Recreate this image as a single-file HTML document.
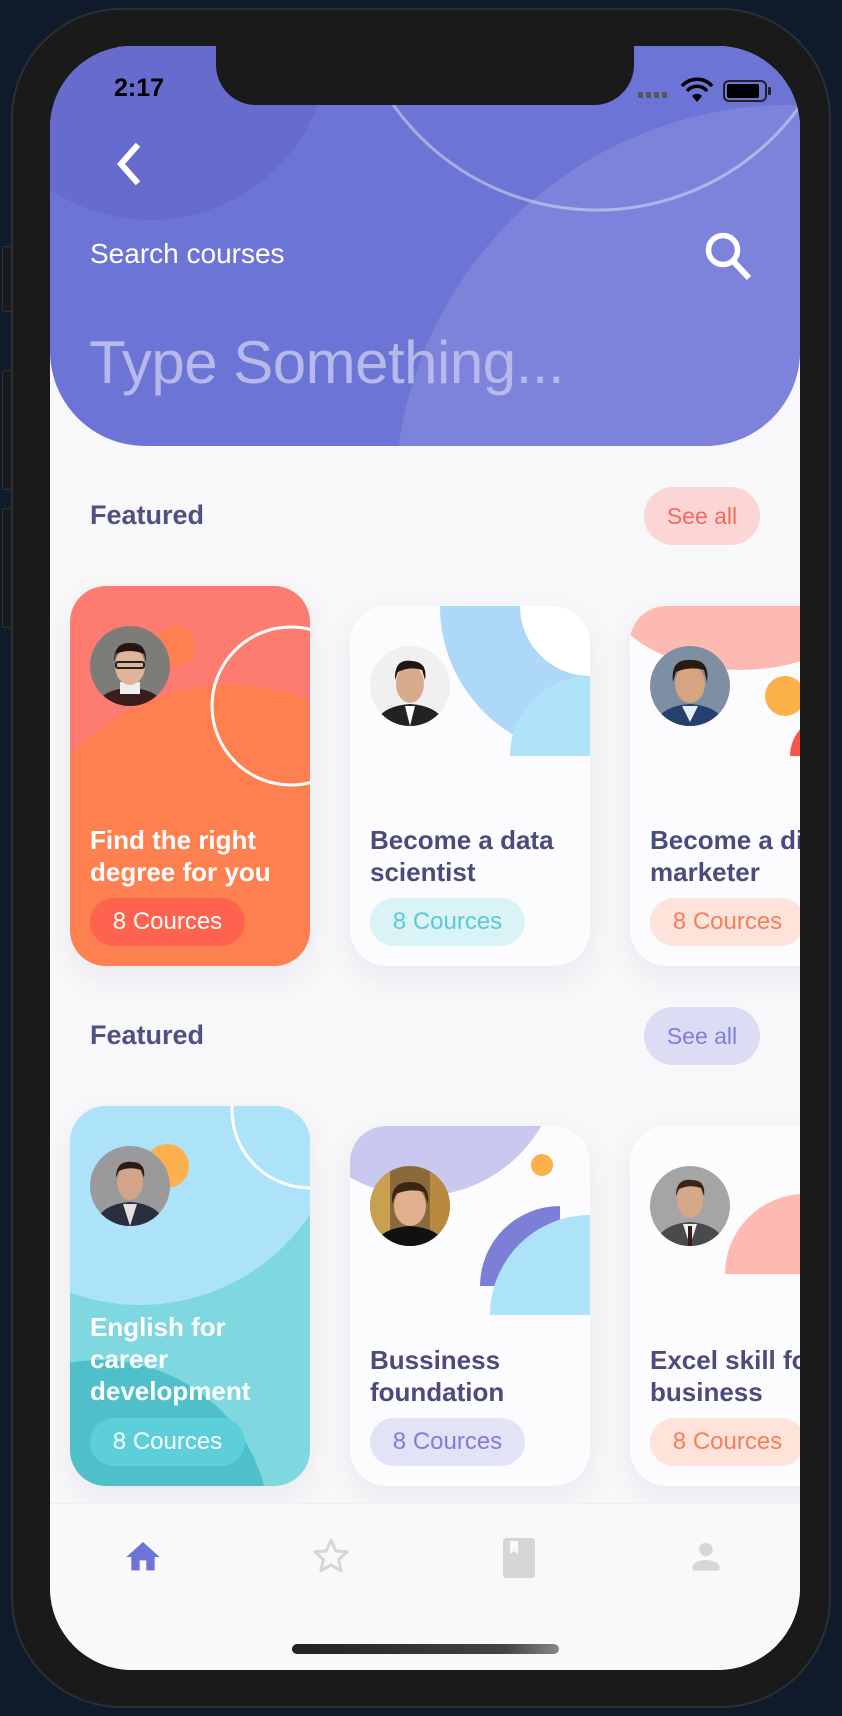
<!DOCTYPE html>
<html><head><meta charset="utf-8">
<style>
*{margin:0;padding:0;box-sizing:border-box}
html,body{width:842px;height:1716px;overflow:hidden;background:#0f1a2a;font-family:"Liberation Sans",sans-serif}
.abs{position:absolute}
.phone{left:11px;top:8px;width:820px;height:1700px;background:#1a1a1a;border-radius:110px;border:2px solid #2a2f38}
.btn{background:#1a1a1a;border:1px solid #333;border-radius:3px;width:12px;left:2px}
.screen{left:50px;top:46px;width:750px;height:1624px;background:#f8f8fa;border-radius:82px;overflow:hidden}
.card{position:absolute;width:240px;border-radius:36px;overflow:hidden;box-shadow:0 12px 30px rgba(60,60,110,0.08)}
.card svg{position:absolute;left:0;top:0}
.title{position:absolute;left:20px;font-weight:bold;font-size:26px;line-height:32px;color:#4a4c7c;white-space:nowrap}
.pill{position:absolute;left:20px;width:155px;height:48px;border-radius:24px;font-size:24px;line-height:48px;text-align:center}
.feat{position:absolute;left:90px;font-size:27px;font-weight:bold;color:#4f5180}
.see{position:absolute;left:644px;width:116px;height:58px;border-radius:29px;font-size:23px;line-height:58px;text-align:center}
</style></head><body>
<div class="abs btn" style="top:246px;height:66px"></div>
<div class="abs btn" style="top:370px;height:120px"></div>
<div class="abs btn" style="top:508px;height:120px"></div>
<div class="abs phone"></div>
<div class="abs screen">
<svg class="abs" style="left:0;top:0" width="750" height="400" viewBox="50 46 750 400">
<defs><clipPath id="hc"><path d="M50,46 H800 V351 A95,95 0 0 1 705,446 H145 A95,95 0 0 1 50,351 Z"/></clipPath></defs>
<g clip-path="url(#hc)">
<rect x="50" y="46" width="750" height="400" fill="#6c75d6"/>
<circle cx="150" cy="40" r="180" fill="#666bcd"/>
<circle cx="790" cy="500" r="395" fill="#7d83db"/>
<circle cx="597" cy="-40" r="250" fill="none" stroke="rgba(255,255,255,0.4)" stroke-width="3"/>
</g>
</svg>
<div class="abs" style="left:166px;top:0;width:418px;height:59px;background:#1a1a1a;border-radius:0 0 40px 40px"></div>
<div class="abs" style="left:64px;top:28px;font-size:25px;font-weight:bold;color:#000">2:17</div>
<svg class="abs" style="left:580px;top:30px" width="150" height="30">
<g fill="#555"><rect x="8" y="16" width="5" height="6" rx="1"/><rect x="16" y="16" width="5" height="6" rx="1"/><rect x="24" y="16" width="5" height="6" rx="1"/><rect x="32" y="16" width="5" height="6" rx="1"/></g>
<path d="M52,10 A20,20 0 0 1 82,10" stroke="#000" stroke-width="3.5" fill="none"/>
<path d="M57,15 A13,13 0 0 1 77,15" stroke="#000" stroke-width="3.5" fill="none"/>
<path d="M62,20 L67,26 L72,20 A7,7 0 0 0 62,20Z" fill="#000"/>
<rect x="94" y="5" width="42" height="20" rx="5" fill="none" stroke="#222" stroke-width="2"/>
<rect x="97" y="8" width="32" height="14" rx="2" fill="#000"/>
<rect x="138" y="11" width="3" height="8" rx="1" fill="#222"/>
</svg>
<svg class="abs" style="left:64px;top:97px" width="30" height="42"><path d="M22,4 L7,21 L22,38" stroke="#fff" stroke-width="6" fill="none" stroke-linecap="square"/></svg>
<div class="abs" style="left:40px;top:192px;font-size:28px;color:#fff">Search courses</div>
<svg class="abs" style="left:650px;top:180px" width="60" height="60"><circle cx="23" cy="24" r="14.5" stroke="#fff" stroke-width="5.5" fill="none"/><path d="M33,35 L49,52" stroke="#fff" stroke-width="6"/></svg>
<div class="abs" style="left:39px;top:282px;font-size:60px;color:#b6b9ea;letter-spacing:-0.5px">Type Something...</div>
</div>

<div class="abs" style="left:0;top:0;width:842px;height:1716px;clip-path:inset(446px 42px 46px 50px round 0 0 82px 82px)">
<div class="feat" style="top:500px">Featured</div>
<div class="see" style="top:487px;background:#fcd6d5;color:#f06b5e">See all</div>

<div class="card" style="left:70px;top:586px;height:380px;background:#fe7b72">
<svg width="240" height="380">
<circle cx="105" cy="60" r="20" fill="#fe8050"/>
<circle cx="160" cy="314" r="215" fill="#fe8050"/>
<circle cx="221" cy="120" r="79" fill="none" stroke="#fff" stroke-width="3"/>
<defs><clipPath id="a1"><circle cx="60" cy="80" r="40"/></clipPath></defs>
<g clip-path="url(#a1)"><rect x="20" y="40" width="80" height="80" fill="#7c7c78"/><ellipse cx="60" cy="122" rx="34" ry="20" fill="#3a1e1e"/><rect x="50" y="96" width="20" height="12" fill="#eee"/><ellipse cx="60" cy="80" rx="15" ry="19" fill="#e0b49a"/><path d="M44,76 Q44,56 60,57 Q77,56 76,76 L74,68 Q60,62 46,68Z" fill="#231510"/><rect x="46" y="76" width="28" height="6" rx="2" fill="none" stroke="#222" stroke-width="2"/></g>
</svg>
<div class="title" style="top:238px;color:#fff">Find the right<br>degree for you</div>
<div class="pill" style="top:312px;background:#fe6350;color:#fff">8 Cources</div>
</div>

<div class="card" style="left:350px;top:606px;height:360px;background:#fcfcfe">
<svg width="240" height="360">
<circle cx="240" cy="0" r="150" fill="#aed8f8"/>
<circle cx="240" cy="0" r="70" fill="#fff"/>
<path d="M160,150 A80,80 0 0 1 240,70 L240,150Z" fill="#aee3f8"/>
<defs><clipPath id="a2"><circle cx="60" cy="80" r="40"/></clipPath></defs>
<g clip-path="url(#a2)"><rect x="20" y="40" width="80" height="80" fill="#f0f0f0"/><path d="M24,120 Q30,100 60,98 Q90,100 96,120Z" fill="#222"/><path d="M55,100 L60,120 L65,100Z" fill="#fff"/><ellipse cx="60" cy="78" rx="14" ry="19" fill="#d8ab8c"/><path d="M45,74 Q44,52 62,55 Q78,56 75,74 L72,64 Q60,60 48,66Z" fill="#1e1612"/></g>
</svg>
<div class="title" style="top:218px">Become a data<br>scientist</div>
<div class="pill" style="top:292px;background:#d9f3f6;color:#5cc9d6">8 Cources</div>
</div>

<div class="card" style="left:630px;top:606px;height:360px;background:#fcfcfe">
<svg width="240" height="360">
<ellipse cx="110" cy="-20" rx="135" ry="84" fill="#fdbab2"/>
<circle cx="155" cy="90" r="20" fill="#fcb04a"/>
<path d="M160,150 A40,40 0 0 1 200,110 L200,150Z" fill="#f5584a"/>
<defs><clipPath id="a3"><circle cx="60" cy="80" r="40"/></clipPath></defs>
<g clip-path="url(#a3)"><rect x="20" y="40" width="80" height="80" fill="#7e8fa3"/><path d="M24,120 Q30,100 60,98 Q90,100 96,120Z" fill="#24406e"/><path d="M52,100 L60,116 L68,100Z" fill="#e8eef5"/><ellipse cx="60" cy="78" rx="15" ry="19" fill="#d6a580"/><path d="M43,76 Q40,52 62,54 Q80,54 77,76 L74,64 Q60,60 46,66Z" fill="#2a1a10"/></g>
</svg>
<div class="title" style="top:218px">Become a digital<br>marketer</div>
<div class="pill" style="top:292px;background:#fde3da;color:#f57f5c">8 Cources</div>
</div>

<div class="feat" style="top:1020px">Featured</div>
<div class="see" style="top:1007px;background:#dcdcf4;color:#7b80d6">See all</div>

<div class="card" style="left:70px;top:1106px;height:380px;background:#7fd7df">
<svg width="240" height="380">
<circle cx="70" cy="-6" r="205" fill="#ade3f8"/>
<circle cx="30" cy="424" r="170" fill="#4fbfca"/>
<circle cx="240" cy="4" r="78" fill="none" stroke="#fff" stroke-width="3"/>
<circle cx="97" cy="60" r="22" fill="#fdb14e"/>
<defs><clipPath id="a4"><circle cx="60" cy="80" r="40"/></clipPath></defs>
<g clip-path="url(#a4)"><rect x="20" y="40" width="80" height="80" fill="#9a9a9c"/><path d="M24,120 Q30,98 60,96 Q90,98 96,120Z" fill="#2a2f40"/><path d="M53,98 L60,120 L67,98Z" fill="#e8e0e0"/><ellipse cx="60" cy="76" rx="13" ry="18" fill="#d2a488"/><path d="M46,72 Q46,54 62,56 Q76,56 74,72 L71,64 Q60,60 49,65Z" fill="#2a1c14"/></g>
</svg>
<div class="title" style="top:205px;color:#fff">English for<br>career<br>development</div>
<div class="pill" style="top:312px;background:#5dcfdb;color:#fff">8 Cources</div>
</div>

<div class="card" style="left:350px;top:1126px;height:360px;background:#fcfcfe">
<svg width="240" height="360">
<circle cx="70" cy="-70" r="140" fill="#c9c9ef"/>
<circle cx="192" cy="39" r="11" fill="#fcb04a"/>
<path d="M130,160 A80,80 0 0 1 210,80 L210,160Z" fill="#7b80d6"/>
<path d="M140,189 A100,100 0 0 1 240,89 L240,189Z" fill="#ade3f8"/>
<defs><clipPath id="a5"><circle cx="60" cy="80" r="40"/></clipPath></defs>
<g clip-path="url(#a5)"><rect x="20" y="40" width="80" height="80" fill="#8a6a3a"/><rect x="20" y="40" width="20" height="80" fill="#c9a050"/><rect x="80" y="40" width="20" height="80" fill="#b88a40"/><path d="M24,120 Q30,102 60,100 Q90,102 96,120Z" fill="#111"/><ellipse cx="60" cy="80" rx="16" ry="20" fill="#e2b08e"/><path d="M42,78 Q40,56 60,56 Q80,56 78,78 L74,66 Q60,62 46,68Z" fill="#3a2414"/></g>
</svg>
<div class="title" style="top:218px">Bussiness<br>foundation</div>
<div class="pill" style="top:292px;background:#e3e3f7;color:#7b80d6">8 Cources</div>
</div>

<div class="card" style="left:630px;top:1126px;height:360px;background:#fcfcfe">
<svg width="240" height="360">
<path d="M95,148 A80,80 0 0 1 255,148Z" fill="#fdbab2"/>
<defs><clipPath id="a6"><circle cx="60" cy="80" r="40"/></clipPath></defs>
<g clip-path="url(#a6)"><rect x="20" y="40" width="80" height="80" fill="#a5a5a5"/><path d="M24,120 Q30,98 60,96 Q90,98 96,120Z" fill="#4a4a4c"/><path d="M53,98 L60,120 L67,98Z" fill="#f0f0f0"/><rect x="58" y="100" width="4" height="20" fill="#3a1a1a"/><ellipse cx="60" cy="74" rx="13" ry="18" fill="#d6a888"/><path d="M46,70 Q46,52 62,54 Q76,54 74,70 L71,62 Q60,58 49,63Z" fill="#3a2618"/></g>
</svg>
<div class="title" style="top:218px">Excel skill for<br>business</div>
<div class="pill" style="top:292px;background:#fde3da;color:#f57f5c">8 Cources</div>
</div>

<div class="abs" style="left:50px;top:1503px;width:750px;height:167px;background:#f9f9f9;border-top:1px solid #eeeef3"></div>
<svg class="abs" style="left:123px;top:1537px" width="40" height="40" viewBox="0 0 24 24"><path d="M10 20v-6h4v6h5v-8h3L12 3 2 12h3v8z" fill="#6c75d6"/></svg>
<svg class="abs" style="left:311px;top:1536px" width="40" height="40" viewBox="0 0 24 24"><path d="M12 2.5l2.8 6.4 6.9.6-5.2 4.6 1.6 6.8L12 17.3 5.9 20.9l1.6-6.8L2.3 9.5l6.9-.6z" fill="none" stroke="#d6d6d6" stroke-width="1.8" stroke-linejoin="round"/></svg>
<svg class="abs" style="left:502px;top:1537px" width="34" height="42"><rect x="1" y="1" width="32" height="40" rx="3" fill="#d6d6d6"/><path d="M8,4 V17 L12,14 L16,17 V4Z" fill="#f9f9f9"/></svg>
<svg class="abs" style="left:688px;top:1539px" width="36" height="36" viewBox="0 0 24 24"><circle cx="12" cy="7" r="4.5" fill="#d6d6d6"/><path d="M3 21v-2.5c0-3 6-4.5 9-4.5s9 1.5 9 4.5V21z" fill="#d6d6d6"/></svg>
<div class="abs" style="left:292px;top:1644px;width:267px;height:10px;border-radius:5px;background:linear-gradient(90deg,#222,#444 80%,#888)"></div>
</div>
</body></html>
